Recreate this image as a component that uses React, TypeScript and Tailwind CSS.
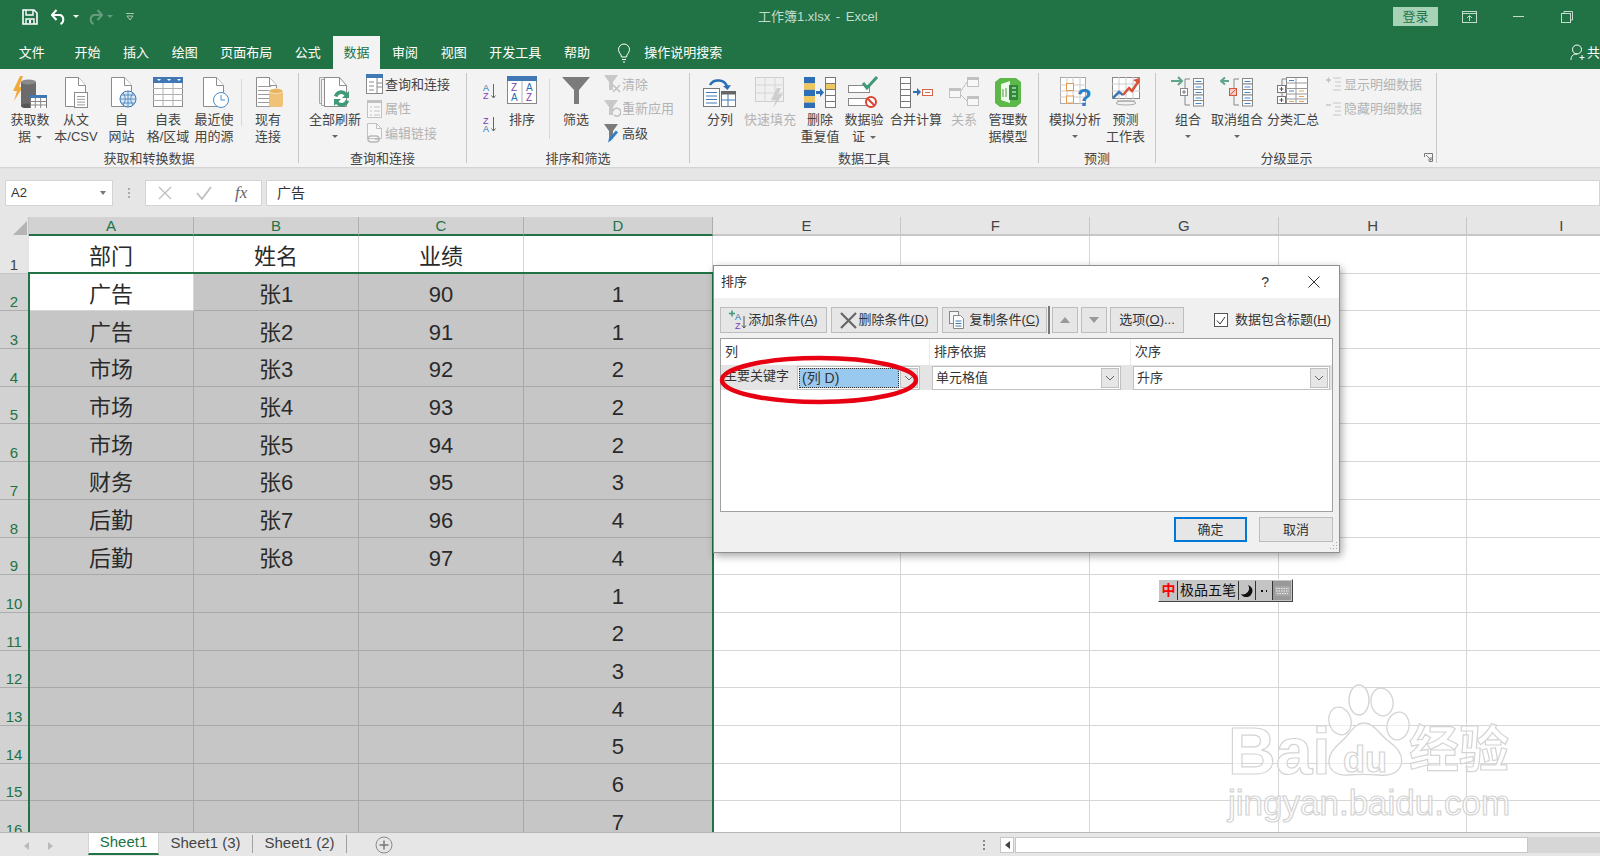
import React from "react";

const S = ({ w = 32, h = 32, children, off }: { w?: number; h?: number; children: React.ReactNode; off?: boolean }) => (
  <svg width={w} height={h} viewBox={`0 0 ${w} ${h}`} className={off ? "opacity-40" : ""}>{children}</svg>
);
const Doc = ({ x = 0, y = 0 }: { x?: number; y?: number }) => (
  <g transform={`translate(${x} ${y})`}>
    <path d="M2.5 1.5h13l7 8v21h-20z" fill="#fff" stroke="#8c8c8c" />
    <path d="M15.5 1.5v8h7" fill="#fff" stroke="#8c8c8c" />
  </g>
);
const Lines = ({ x, y, w, n, gap = 4, c = "#9a9a9a" }: { x: number; y: number; w: number; n: number; gap?: number; c?: string }) => (
  <>{Array.from({ length: n }).map((_, i) => <path key={i} d={`M${x} ${y + i * gap + .5}h${w}`} stroke={c} />)}</>
);
const MiniTable = ({ x, y, w = 15, h = 13 }: { x: number; y: number; w?: number; h?: number }) => (
  <g>
    <rect x={x + .5} y={y + .5} width={w} height={h} fill="#fff" stroke="#777" />
    <rect x={x} y={y} width={w + 1} height={3} fill="#3f78b5" />
    <path d={`M${x} ${y + 6.5}h${w}M${x} ${y + 10}h${w}M${x + w / 3} ${y + 3}v${h - 3}M${x + (2 * w) / 3} ${y + 3}v${h - 3}`} stroke="#888" />
  </g>
);

const IGetData = () => (
  <S w={38}>
    <path d="M9 0L2 15h4L3 25 12 11H8l4-11z" fill="#f2a93b" />
    <path d="M10 6h15v24H10z" fill="#6b6b6b" />
    <ellipse cx="17.5" cy="6" rx="7.5" ry="2.5" fill="#8a8a8a" />
    <ellipse cx="17.5" cy="30" rx="7.5" ry="2.5" fill="#555" />
    <MiniTable x={19} y={19} w={16} h={13} />
  </S>
);
const IFromText = () => (
  <S><Doc x={3} /><rect x="14.5" y="16.5" width="13" height="15" fill="#fff" stroke="#8c8c8c" /><Lines x={17} y={20} w={8} n={4} gap={2.8} /></S>
);
const IWeb = () => (
  <S><Doc x={3} /><circle cx="22" cy="23" r="8" fill="#dbe9f7" stroke="#3f78b5" /><path d="M14 23h16M22 15v16M17 17c3 4 3 8 0 12M27 17c-3 4-3 8 0 12M15.5 19h13M15.5 27h13" stroke="#3f78b5" fill="none" strokeWidth=".8" /></S>
);
const ITable = () => (
  <S><rect x="1.5" y="1.5" width="29" height="29" fill="#fff" stroke="#8c8c8c" /><rect x="1" y="1" width="30" height="6" fill="#3f78b5" /><path d="M1 12.5h30M1 18.5h30M1 24.5h30M11 7v24M21 7v24" stroke="#b0b0b0" /><path d="M5 3l2 2 2-2zM15 3l2 2 2-2zM25 3l2 2 2-2z" fill="#fff" /></S>
);
const IRecent = () => (
  <S><Doc x={3} /><circle cx="23" cy="24" r="7.5" fill="#fff" stroke="#4a8bc9" /><path d="M23 19v5h4" stroke="#4a8bc9" fill="none" /></S>
);
const IExisting = () => (
  <S><Doc x={2} /><Lines x={6} y={10} w={13} n={6} /><rect x="17" y="15" width="14" height="16" rx="2" fill="#f0c277" /><ellipse cx="24" cy="15" rx="7" ry="2.5" fill="#e9b35e" stroke="#fff" strokeWidth=".5" /></S>
);
const IRefreshAll = () => (
  <S w={34}>
    <path d="M1.5 1.5h13v26h-13z" fill="#eee" stroke="#a8a8a8" />
    <path d="M3.5 3.5h13v26h-13z" fill="#f4f4f4" stroke="#a8a8a8" />
    <path d="M6.5 1.5h15l7 8v21h-22z" fill="#fff" stroke="#8c8c8c" /><path d="M21.5 1.5v8h7" fill="none" stroke="#8c8c8c" />
    <path d="M16 20a7.5 7.5 0 0 1 13-3l2-2v7h-7l2.500-2.500a4 4 0 0 0-7 1.500zM31 25a7.500 7.500 0 0 1-13 3l-2 2v-7h7l-2.500 2.500a4 4 0 0 0 7-1.500z" fill="#3f9a76" />
  </S>
);
const IQuery = () => (
  <S w={18} h={20}><rect x=".5" y=".5" width="16" height="19" fill="#fff" stroke="#888" /><rect x="0" y="0" width="17" height="4" fill="#3f78b5" /><path d="M11 4v15M11 9h6M11 13h6M3 8h5M3 12h5M3 16h5" stroke="#8a8a8a" /></S>
);
const IProps = () => (
  <S w={18} h={20} off><rect x="1.500" y="1.500" width="14" height="17" fill="#fff" stroke="#777" /><rect x="1" y="1" width="15" height="3" fill="#777" /><path d="M4 8h2M8 8h6M4 12h2M8 12h6M4 16h2M8 16h6" stroke="#777" /></S>
);
const ILinks = () => (
  <S w={18} h={22} off><path d="M1.500 1.500h9l5 5v10h-14z" fill="#fff" stroke="#777" /><path d="M10.500 1.500v5h5" fill="none" stroke="#777" /><path d="M5 14h5a3 3 0 0 1 0 6H5a3 3 0 0 1 0-6zM9 17h5" fill="none" stroke="#666" strokeWidth="1.500" /></S>
);
const ISortAZ = ({ flip }: { flip?: boolean }) => (
  <svg width="15" height="17" viewBox="0 0 15 17">
    <text x="0" y="8" fontSize="9" fontFamily="Liberation Sans" fill={flip ? "#7a3fb5" : "#2a6fb5"}>{flip ? "Z" : "A"}</text>
    <text x="0" y="16" fontSize="9" fontFamily="Liberation Sans" fill={flip ? "#2a6fb5" : "#7a3fb5"}>{flip ? "A" : "Z"}</text>
    <path d="M10.500 1v14M8.500 12.500l2 2.500 2-2.500" stroke="#666" fill="none" />
  </svg>
);
const ISort = () => (
  <S w={30} h={28}>
    <rect x=".5" y="1" width="29" height="26.500" fill="#fff" stroke="#888" /><rect x="0" y="0" width="30" height="5" fill="#3f78b5" />
    <path d="M15 5v23" stroke="#b0b0b0" />
    <text x="4" y="15" fontSize="10" fontFamily="Liberation Sans" fill="#7a3fb5">Z</text>
    <text x="19" y="15" fontSize="10" fontFamily="Liberation Sans" fill="#2a6fb5">A</text>
    <text x="4" y="25" fontSize="10" fontFamily="Liberation Sans" fill="#2a6fb5">A</text>
    <text x="19" y="25" fontSize="10" fontFamily="Liberation Sans" fill="#7a3fb5">Z</text>
  </S>
);
const IFilter = () => (
  <S w={30} h={29}><path d="M1 1h28L18 14v14h-5V14z" fill="#7b7b7b" /></S>
);
const IFilterSm = ({ kind }: { kind: "clear" | "re" | "adv" }) => (
  <S w={18} h={20} off={kind !== "adv"}>
    <path d="M1 1h14L10 8v8H6V8z" fill={kind === "adv" ? "#7b7b7b" : "#8a8a8a"} />
    {kind === "clear" && <path d="M10 11l7 7M17 11l-7 7" stroke="#777" strokeWidth="1.500" />}
    {kind === "re" && <path d="M10 12a4 4 0 1 1 1 4" stroke="#777" fill="none" strokeWidth="1.500" />}
    {kind === "adv" && <path d="M5 19.500l1-4 7-8 2 2-7 8z" fill="#2f7fd0" />}
  </S>
);
const ISplit = () => (
  <S w={34}>
    <rect x=".5" y="12.500" width="16" height="18" fill="#fff" stroke="#777" /><Lines x={3} y={16} w={11} n={4} gap={3.500} c="#3f78b5" />
    <rect x="18.500" y="15.500" width="14" height="15" fill="#fff" stroke="#777" /><rect x="18" y="15" width="15" height="3.500" fill="#666" /><path d="M25 18v12M18 24h14" stroke="#3f78b5" />
    <path d="M7 9a9 8 0 0 1 17 2" stroke="#2a6fb5" strokeWidth="2.500" fill="none" /><path d="M20 10l4.500 4 3.500-5z" fill="#2a6fb5" />
  </S>
);
const IFlash = () => (
  <S off><rect x="1.500" y="1.500" width="28" height="24" fill="#eee" stroke="#999" /><path d="M1 9h29M1 17h29M11 1v25M21 1v25" stroke="#aaa" /><path d="M23 12l-6 12h5l-3 8 10-14h-5l3-6z" fill="#999" /></S>
);
const IDup = () => (
  <S w={34}>
    {["#2e6eb5", "#f0c75e", "#2e6eb5", "#f0c75e", "#2e6eb5"].map((c, i) => <rect key={i} x="1" y={1 + i * 6.400} width="11" height="6.400" fill={c} />)}
    {["#fff", "#f0c75e", "#fff", "#fff", "#fff"].map((c, i) => <rect key={i} x="22.500" y={1.500 + i * 6} width="10" height="6" fill={c} stroke="#777" />)}
    <path d="M13 15h4v-3l4 4.500-4 4.500v-3h-4z" fill="#2e6eb5" />
  </S>
);
const IValid = () => (
  <S>
    <rect x=".5" y="9.500" width="21" height="7" fill="#fff" stroke="#888" />
    <rect x=".5" y="22.500" width="21" height="7" fill="#fff" stroke="#888" />
    <path d="M15 7l4 5 10-11" stroke="#3f9a76" strokeWidth="3" fill="none" />
    <circle cx="23" cy="26" r="5" fill="#fff" stroke="#d9432f" strokeWidth="2" /><path d="M19.500 22.500l7 7" stroke="#d9432f" strokeWidth="2" />
  </S>
);
const IMerge = () => (
  <S w={34}>
    {[0, 1, 2, 3, 4].map(i => <rect key={i} x="1.500" y={1.500 + i * 6} width="10" height="6" fill="#fff" stroke="#777" />)}
    <path d="M14 15h4v-3l4 4-4 4v-3h-4z" fill="#2e6eb5" />
    <rect x="23.500" y="13.500" width="10" height="6" fill="#fff" stroke="#d9634a" /><path d="M26 16.500h5" stroke="#d9634a" />
  </S>
);
const IRelation = () => (
  <S off>
    <rect x="1.500" y="12.500" width="11" height="9" fill="#fff" stroke="#777" /><rect x="1" y="12" width="12" height="3" fill="#777" />
    <rect x="19.500" y="1.500" width="11" height="9" fill="#fff" stroke="#777" /><rect x="19" y="1" width="12" height="3" fill="#777" />
    <rect x="19.500" y="20.500" width="11" height="9" fill="#fff" stroke="#777" /><rect x="19" y="20" width="12" height="3" fill="#777" />
    <path d="M13 15l6-9M13 19l6 6" stroke="#777" fill="none" />
  </S>
);
const IModel = () => (
  <S w={28}>
    <path d="M6 2h16l5 4v21l-5 4H6l-5-4V6z" fill="#5cb848" />
    <path d="M7 8l9-3v22l-9-3z" fill="#fff" opacity=".9" /><rect x="15" y="9" width="9" height="15" fill="#2f8a37" />
    <path d="M18 12h4M18 16h4M18 20h4M10 11v10" stroke="#fff" /><path d="M9 13v8M12 12v9" stroke="#4a9a3f" />
  </S>
);
const IWhatIf = () => (
  <S>
    <rect x="1.500" y="1.500" width="25" height="26" fill="#fff" stroke="#aaa" />
    <path d="M1 9h26M1 15h26M1 21h26M8 1v27M14 1v27M21 1v27" stroke="#ccc" />
    <rect x="7.500" y="7.500" width="7" height="7" fill="#fff" stroke="#e89a4a" /><rect x="7.500" y="20" width="7" height="7" fill="#fff" stroke="#e89a4a" />
    <text x="18" y="30" fontSize="24" fontWeight="700" fontFamily="Liberation Sans" fill="#2a7fc9">?</text>
  </S>
);
const IForecast = () => (
  <S w={30}>
    <rect x="1.500" y="1.500" width="27" height="21" fill="#fff" stroke="#888" />
    <path d="M1 8h28M1 15h28M8 1v22M15 1v22M22 1v22" stroke="#ccc" />
    <path d="M2 22l6-6 4 3" stroke="#3f78b5" strokeWidth="2.500" fill="none" />
    <path d="M12 19l6-7 3 3 6-9" stroke="#d9533a" strokeWidth="2.500" fill="none" /><path d="M22 4l6-2v6z" fill="#d9533a" />
    <path d="M6 25h18" stroke="#999" /><ellipse cx="15" cy="27" rx="10" ry="2" fill="none" stroke="#aaa" />
  </S>
);
const OutlineCol = ({ x }: { x: number }) => (
  <g>
    {[0, 1, 2, 3, 4].map(i => <g key={i}><rect x={x + .5} y={2.500 + i * 5.500} width="10" height="5.500" fill="#fff" stroke="#888" /><path d={`M${x + 2.500} ${5.500 + i * 5.500}h6`} stroke="#3f88d0" /></g>)}
  </g>
);
const IGroup = ({ un }: { un?: boolean }) => (
  <S w={34}>
    <path d={un ? "M1 5h8M5 1.500L1 5l4 3.500" : "M0 5h11M7 1l4 4-4 4"} stroke="#5fa58a" strokeWidth="2" fill="none" />
    <path d="M19 3h-5v26h5" stroke="#888" fill="none" />
    <rect x="9.500" y="12.500" width="7" height="7" fill={un ? "#f3d0c6" : "#fff"} stroke={un ? "#d9533a" : "#888"} />
    {un ? <path d="M10.500 18.500l5-5" stroke="#d9533a" /> : <path d="M11 16h4M13 14v4" stroke="#777" />}
    <OutlineCol x={22} />
  </S>
);
const ISubtotal = () => (
  <S>
    <rect x="9.500" y="1.500" width="21" height="26" fill="#fff" stroke="#888" />
    <path d="M9 7h22M9 12.500h22M9 18h22M9 23h22M19 1v27" stroke="#999" />
    <path d="M12 4.500h5M12 15h5" stroke="#3f88d0" /><path d="M22 15h5M22 20.500h5M12 25.500h5M22 25.500h5" stroke="#e8a05a" />
    <path d="M9 3H5v7M5 17v8h4" stroke="#888" fill="none" />
    <rect x=".5" y="9.500" width="8" height="7" fill="#fff" stroke="#777" /><path d="M2.500 13h4M4.500 11v4" stroke="#555" />
    <rect x=".5" y="20.500" width="8" height="7" fill="#fff" stroke="#777" /><path d="M2.500 24h4M4.500 22v4" stroke="#555" />
  </S>
);
const IOutSm = ({ plus }: { plus?: boolean }) => (
  <S w={16} h={16} off>
    <path d={plus ? "M0 4h5M2.500 1.500v5" : "M0 4h5"} stroke="#777" strokeWidth="1.300" />
    <path d="M7 2h8M9 6h6M9 10h6M7 14h8" stroke="#888" />
  </S>
);

const Caret = ({ inline }: { inline?: boolean }) => (
  <span className={`${inline ? "ml-[5px] align-middle" : ""} inline-block w-0 h-0 border-x-[3px] border-x-transparent border-t-[3px] border-t-[#666]`} />
);

const Big = ({ w, icon, t, caret, off }: { w: number; icon: React.ReactNode; t: string[]; caret?: "inline" | "line"; off?: boolean }) => (
  <div className={`flex flex-col items-center shrink-0 ${off ? "text-[#b4b4b4]" : "text-[#444]"}`} style={{ width: w }}>
    <div className="h-[35px] flex items-start justify-center">{icon}</div>
    {t.map((l, i) => (
      <div key={i} className="h-[17px] leading-[17px] text-[13px] whitespace-nowrap">
        {l}{caret === "inline" && i === t.length - 1 && <Caret inline />}
      </div>
    ))}
    {caret === "line" && <div className="h-[17px] flex items-center"><Caret /></div>}
  </div>
);

const Small = ({ icon, t, off, iw = 20 }: { icon: React.ReactNode; t: string; off?: boolean; iw?: number }) => (
  <div className={`h-[24.5px] flex items-center text-[13px] whitespace-nowrap ${off ? "text-[#b4b4b4]" : "text-[#444]"}`}>
    <div className="flex justify-center shrink-0" style={{ width: iw }}>{icon}</div>
    {t}
  </div>
);

const Group = ({ w, label, children, launcher, labelPad = 0 }: { w: number; label: string; children: React.ReactNode; launcher?: boolean; labelPad?: number }) => (
  <div className="relative h-[90px] flex flex-col shrink-0 border-r border-r-[#c8c8c8]" style={{ width: w }}>
    <div className="flex h-[71px] items-start pt-[3px]">{children}</div>
    <div className="mt-auto -mb-[4px] h-[17px] leading-[17px] text-[13px] text-center text-[#444]" style={{ paddingRight: labelPad }}>{label}</div>
    {launcher && (
      <svg width="9" height="9" viewBox="0 0 9 9" className="absolute right-[3px] bottom-[1px]"><path d="M.5 4V.5H8.500V8.500H5M2 2l5 5M4 7h3V4" stroke="#777" fill="none" /></svg>
    )}
  </div>
);

const VSep = ({ ml = 0, mr = 0, h = 47 }: { ml?: number; mr?: number; h?: number }) => (
  <div className="w-px bg-[#d8d8d8] shrink-0 mt-[3px]" style={{ marginLeft: ml, marginRight: mr, height: h }} />
);

const Ribbon = () => (
  <div className="h-[99px] shrink-0 bg-[#f3f3f3] border-b border-b-[#d4d4d4] flex pt-[4px] items-start">
    <Group w={299} label="获取和转换数据">
      <div className="w-[7px]" />
      <Big w={46} icon={<IGetData />} t={["获取数", "据"]} caret="inline" />
      <Big w={46} icon={<IFromText />} t={["从文", "本/CSV"]} />
      <Big w={45} icon={<IWeb />} t={["自", "网站"]} />
      <Big w={48} icon={<ITable />} t={["自表", "格/区域"]} />
      <Big w={44} icon={<IRecent />} t={["最近使", "用的源"]} />
      <VSep ml={5} mr={4} />
      <Big w={44} icon={<IExisting />} t={["现有", "连接"]} />
    </Group>
    <Group w={168} label="查询和连接">
      <div className="w-[8px]" />
      <Big w={56} icon={<IRefreshAll />} t={["全部刷新"]} caret="line" />
      <div className="flex flex-col -mt-[4px] ml-[2px]">
        <Small icon={<IQuery />} t="查询和连接" />
        <Small icon={<IProps />} t="属性" off />
        <Small icon={<ILinks />} t="编辑链接" off />
      </div>
    </Group>
    <Group w={223} label="排序和筛选">
      <div className="flex flex-col w-[36px] items-end pr-[5px] gap-[16px] pt-[7px]">
        <ISortAZ />
        <ISortAZ flip />
      </div>
      <Big w={38} icon={<ISort />} t={["排序"]} />
      <VSep ml={8} mr={9} h={60} />
      <Big w={34} icon={<IFilter />} t={["筛选"]} />
      <div className="flex flex-col -mt-[4px] ml-[9px]">
        <Small icon={<IFilterSm kind="clear" />} t="清除" off />
        <Small icon={<IFilterSm kind="re" />} t="重新应用" off />
        <Small icon={<IFilterSm kind="adv" />} t="高级" />
      </div>
    </Group>
    <Group w={349} label="数据工具">
      <div className="w-[12px]" />
      <Big w={36} icon={<ISplit />} t={["分列"]} />
      <Big w={64} icon={<IFlash />} t={["快速填充"]} off />
      <Big w={36} icon={<IDup />} t={["删除", "重复值"]} />
      <Big w={52} icon={<IValid />} t={["数据验", "证"]} caret="inline" />
      <Big w={52} icon={<IMerge />} t={["合并计算"]} />
      <Big w={44} icon={<IRelation />} t={["关系"]} off />
      <Big w={44} icon={<IModel />} t={["管理数", "据模型"]} />
    </Group>
    <Group w={117} label="预测">
      <div className="w-[8px]" />
      <Big w={56} icon={<IWhatIf />} t={["模拟分析"]} caret="line" />
      <Big w={45} icon={<IForecast />} t={["预测", "工作表"]} />
    </Group>
    <Group w={281} label="分级显示" launcher labelPad={19}>
      <div className="w-[9px]" />
      <Big w={46} icon={<IGroup />} t={["组合"]} caret="line" />
      <Big w={52} icon={<IGroup un />} t={["取消组合"]} caret="line" />
      <Big w={60} icon={<ISubtotal />} t={["分类汇总"]} />
      <div className="flex flex-col -mt-[4px] ml-[1px]">
        <Small icon={<IOutSm plus />} t="显示明细数据" off />
        <Small icon={<IOutSm />} t="隐藏明细数据" off />
      </div>
    </Group>
  </div>
);

const tabs = ["开始", "插入", "绘图", "页面布局", "公式", "数据", "审阅", "视图", "开发工具", "帮助"];

const Top = () => (
  <div className="h-[69px] shrink-0 bg-[#217346] flex flex-col">
    <div className="h-[33px] flex items-center relative shrink-0">
      <div className="flex items-center w-[758px]">
        <svg width="16" height="16" viewBox="0 0 16 16" className="ml-[22px]"><path d="M1 1h11l3 3v11H1z" fill="none" stroke="#fff" strokeWidth="1.600" /><path d="M4 1v5h7V1M4 15v-5h8v5" fill="none" stroke="#fff" strokeWidth="1.400" /><rect x="7" y="11" width="2" height="3" fill="#fff" /></svg>
        <svg width="17" height="16" viewBox="0 0 17 16" className="ml-[13px]"><path d="M1.500 6h8a5 5 0 0 1 0 9M5.500 1L1 6l4.500 5" fill="none" stroke="#fff" strokeWidth="2" /></svg>
        <span className="ml-[5px] w-0 h-0 border-x-[3px] border-x-transparent border-t-[3px] border-t-white" />
        <svg width="16" height="16" viewBox="0 0 16 16" className="ml-[8px] opacity-30"><path d="M14.500 6h-8a5 5 0 0 0 0 9M10.500 1L15 6l-4.500 5" fill="none" stroke="#fff" strokeWidth="2" /></svg>
        <span className="ml-[4px] w-0 h-0 border-x-[3px] border-x-transparent border-t-[3px] border-t-white opacity-30" />
        <svg width="10" height="10" viewBox="0 0 10 10" className="ml-[12px] opacity-60"><path d="M1 1.500h8M2 4l3 4 3-4z" fill="none" stroke="#fff" /></svg>
      </div>
      <div className="text-[13px] text-[#c3dccd] whitespace-nowrap [word-spacing:2px]">工作簿1.xlsx - Excel</div>
      <div className="ml-auto flex items-center">
        <div className="w-[45px] h-[19px] bg-[#a8d2b6] text-[#217346] text-[13px] leading-[19px] text-center">登录</div>
        <svg width="15" height="12" viewBox="0 0 15 12" className="ml-[24px]"><rect x=".5" y=".5" width="14" height="11" fill="none" stroke="#c3dccd" /><path d="M1 2.500h13M7.500 10V5M5 7l2.500-2.500L10 7" stroke="#c3dccd" fill="none" /></svg>
        <div className="ml-[36px] w-[11px] h-px bg-[#c3dccd]" />
        <svg width="12" height="12" viewBox="0 0 12 12" className="ml-[37px] mr-[27px]"><rect x=".5" y="2.500" width="9" height="9" fill="none" stroke="#c3dccd" /><path d="M3 2.500V.5h8.500v8.500H9.500" fill="none" stroke="#c3dccd" /></svg>
      </div>
    </div>
    <div className="h-[36px] flex items-end text-[13px] text-white relative shrink-0">
      <div className="ml-[7.5px] mr-[7px] px-[11.3px] h-[33px] leading-[34px]">文件</div>
      {tabs.map(t => (
        <div key={t} className={t === "数据"
          ? "h-[33px] leading-[34px] px-[10.3px] mx-[1px] bg-[#f3f3f3] text-[#217346]"
          : "h-[33px] leading-[34px] px-[11.3px]"}>{t}</div>
      ))}
      <svg width="16" height="20" viewBox="0 0 16 20" className="ml-[15px] mb-[6px]"><path d="M5.500 14c0-3-3-4-3-7.500a5.500 5.500 0 0 1 11 0c0 3.500-3 4.500-3 7.500zM6 16.500h4M7 19h2" fill="none" stroke="#fff" /></svg>
      <div className="ml-[12px] h-[33px] leading-[34px]">操作说明搜索</div>
      <div className="absolute left-[1570px] bottom-0 h-[33px] flex items-center whitespace-nowrap">
        <svg width="16" height="17" viewBox="0 0 16 17"><circle cx="7" cy="5.500" r="4.500" fill="none" stroke="#fff" /><path d="M1 16c0-4 2-6 6-6M12 11v5M9.500 13.500h5" fill="none" stroke="#fff" /></svg>
        <span className="ml-[1px]">共享</span>
      </div>
    </div>
  </div>
);

const FormulaBar = () => (
  <div className="h-[49px] shrink-0 bg-[#e6e6e6] flex items-start pt-[11px] border-t border-t-[#e0e0e0]">
    <div className="ml-[5px] w-[108px] h-[26px] bg-white border border-[#d4d4d4] flex items-center justify-between pl-[5px] pr-[6px] text-[13px] text-[#333]">
      A2<span className="w-0 h-0 border-x-[3px] border-x-transparent border-t-[4px] border-t-[#777]" />
    </div>
    <div className="w-[32px] h-[26px] flex flex-col items-center justify-center gap-[2px]">
      <i className="w-[2px] h-[2px] bg-[#aaa]" /><i className="w-[2px] h-[2px] bg-[#aaa]" /><i className="w-[2px] h-[2px] bg-[#aaa]" />
    </div>
    <div className="w-[117px] h-[26px] bg-white border border-[#d4d4d4] flex items-center text-[#666]">
      <svg width="14" height="14" viewBox="0 0 14 14" className="ml-[12px]"><path d="M1 1l12 12M13 1L1 13" stroke="#c0c0c0" strokeWidth="1.400" /></svg>
      <svg width="16" height="14" viewBox="0 0 16 14" className="ml-[24px]"><path d="M1 7l5 6L15 1" stroke="#c0c0c0" strokeWidth="1.800" fill="none" /></svg>
      <span className="ml-[23px] text-[17px] italic [font-family:'Liberation_Serif',serif]">fx</span>
    </div>
    <div className="ml-[4px] flex-1 h-[26px] bg-white border border-[#d4d4d4] text-[14px] leading-[24px] pl-[10px] text-[#333]">广告</div>
  </div>
);

const COLS = ["A", "B", "C", "D", "E", "F", "G", "H", "I"];
const SEL = ["A", "B", "C", "D"];
const colW = (c: string) => (["A", "B", "C"].includes(c) ? "w-[165px]" : "w-[188.7px]");
const DATA: [string, string, string, string][] = [
  ["部门", "姓名", "业绩", ""],
  ["广告", "张1", "90", "1"],
  ["广告", "张2", "91", "1"],
  ["市场", "张3", "92", "2"],
  ["市场", "张4", "93", "2"],
  ["市场", "张5", "94", "2"],
  ["财务", "张6", "95", "3"],
  ["后勤", "张7", "96", "4"],
  ["后勤", "张8", "97", "4"],
  ["", "", "", "1"],
  ["", "", "", "2"],
  ["", "", "", "3"],
  ["", "", "", "4"],
  ["", "", "", "5"],
  ["", "", "", "6"],
  ["", "", "", "7"],
];

const Sheet = () => (
  <div className="relative flex-1 overflow-hidden bg-white">
    <div className="flex h-[19px]">
      <div className="w-[29px] shrink-0 bg-[#e6e6e6] relative border-r border-r-[#c6c6c6]">
        <svg width="14" height="14" viewBox="0 0 14 14" className="absolute right-[1px] bottom-[1px]"><path d="M14 0v14H0z" fill="#b4b4b4" /></svg>
      </div>
      {COLS.map(c => {
        const s = SEL.includes(c);
        return (
          <div key={c} className={`${colW(c)} shrink-0 text-center text-[15px] leading-[18px] [font-family:'Liberation_Sans',sans-serif] border-r ${s ? "bg-[#d2d2d2] text-[#217346] border-b-2 border-b-[#217346] border-r-[#aeaeae]" : "bg-[#e6e6e6] text-[#444] border-b-2 border-b-[#c6c6c6] border-r-[#c6c6c6]"}`}>{c}</div>
        );
      })}
    </div>
    {DATA.map((r, i) => {
      const selRow = i > 0;
      return (
        <div key={i} className="flex h-[37.7px]">
          <div className={`w-[29px] shrink-0 flex items-end justify-center text-[15px] leading-[16px] pr-[1px] [font-family:'Liberation_Sans',sans-serif] border-b ${selRow ? "bg-[#d2d2d2] text-[#217346] border-b-[#aeaeae]" : "bg-[#e6e6e6] text-[#444] border-b-[#c6c6c6]"}`}>{i + 1}</div>
          {COLS.map((c, j) => {
            const inSel = selRow && j < 4;
            const active = i === 1 && j === 0;
            const bg = inSel && !active ? "bg-[#c6c6c6] border-[#a8a8a8]" : "bg-white border-[#d6d6d6]";
            return (
              <div key={c} className={`${colW(c)} shrink-0 border-r border-b ${bg} flex items-center justify-center pt-[5px] text-[22px] text-[#2a2a2a]`}>{r[j] ?? ""}</div>
            );
          })}
        </div>
      );
    })}
    <div className="absolute left-[28px] top-[55px] w-[686px] h-[640px] border-2 border-[#217346] pointer-events-none" />
  </div>
);

const Footer = () => (
  <div className="h-[24px] shrink-0 bg-[#e6e6e6] flex items-stretch text-[15px] text-[#444] border-t border-t-[#b8b8b8] relative">
    <svg width="5" height="8" viewBox="0 0 5 8" className="ml-[24px] mt-[9px] opacity-30"><path d="M5 0v8L0 4z" fill="#555" /></svg>
    <svg width="5" height="8" viewBox="0 0 5 8" className="ml-[19px] mt-[9px] opacity-30"><path d="M0 0v8l5-4z" fill="#555" /></svg>
    <div className="ml-[35px] w-[71px] h-[22px] bg-white border-b-2 border-b-[#217346] border-x border-x-[#d4d4d4] text-[#217346] text-center leading-[17px]">Sheet1</div>
    <div className="w-[94px] text-center leading-[15px] h-[18px] mt-[2px] border-r border-r-[#a0a0a0]">Sheet1 (3)</div>
    <div className="w-[94px] text-center leading-[15px] h-[18px] mt-[2px] border-r border-r-[#a0a0a0]">Sheet1 (2)</div>
    <svg width="18" height="18" viewBox="0 0 18 18" className="ml-[28px] mt-[3px]"><circle cx="9" cy="9" r="8" fill="none" stroke="#8a8a8a" /><path d="M9 4.500v9M4.500 9h9" stroke="#777" strokeWidth="1.500" /></svg>
    <div className="ml-auto flex items-center">
      <div className="flex flex-col gap-[2px] mr-[15px]"><i className="w-[2px] h-[2px] bg-[#888]" /><i className="w-[2px] h-[2px] bg-[#888]" /><i className="w-[2px] h-[2px] bg-[#888]" /></div>
      <div className="w-[14px] h-[16px] bg-white border border-[#c6c6c6] flex items-center justify-center mr-[1px]"><svg width="5" height="8" viewBox="0 0 5 8"><path d="M5 0v8L0 4z" fill="#444" /></svg></div>
      <div className="w-[513px] h-[16px] bg-white border border-[#c6c6c6]" />
      <div className="w-[72px] h-[16px] bg-[#d6d6d6]" />
    </div>
  </div>
);

const DBtn = ({ w, children }: { w: number; children?: React.ReactNode }) => (
  <div className="h-[26px] shrink-0 bg-[#e6e6e6] border border-[#bdbdbd] flex items-center justify-center text-[13px] text-[#333] whitespace-nowrap" style={{ width: w }}>{children}</div>
);

const Chevron = () => (
  <svg width="10" height="6" viewBox="0 0 10 6"><path d="M1 1l4 4 4-4" stroke="#666" fill="none" /></svg>
);

const Combo = ({ w, t, sel }: { w: number; t: string; sel?: boolean }) => (
  <div className="h-[24px] bg-white border border-[#c0c0c0] flex items-stretch text-[13px] text-[#333] shrink-0 p-[1px]" style={{ width: w }}>
    {sel
      ? <div className="flex-1 bg-[#99c9ef] border border-dotted border-[#333] pl-[2px] leading-[18px] text-[14px]">(列 D)</div>
      : <div className="flex-1 pl-[2px] leading-[19px]">{t}</div>}
    <div className="w-[18px] ml-[1px] bg-[#e6e6e6] border border-[#c0c0c0] flex items-center justify-center"><Chevron /></div>
  </div>
);

const Dialog = () => (
  <div className="absolute left-[713px] top-[265px] w-[627px] h-[288px] bg-[#f0f0f0] border border-[#8f8f8f] shadow-[2px_3px_8px_rgba(0,0,0,0.35)] flex flex-col text-[#333]">
    <div className="h-[32px] bg-white flex items-center pl-[7px] text-[13px] shrink-0">
      排序
      <span className="ml-auto text-[14px] mr-[39px] [font-family:'Liberation_Sans',sans-serif]">?</span>
      <svg width="12" height="12" viewBox="0 0 12 12" className="mr-[19px]"><path d="M.5.5l11 11M11.500.5l-11 11" stroke="#333" /></svg>
    </div>
    <div className="flex items-center h-[26px] pl-[6px] mt-[9px] shrink-0">
      <DBtn w={107}>
        <svg width="18" height="20" viewBox="0 0 18 20" className="mr-[1px]"><path d="M0 3.500h6M3 .5v6" stroke="#3f9a76" strokeWidth="1.500" /><text x="6" y="10" fontSize="9" fontFamily="Liberation Sans" fill="#2a6fb5">A</text><text x="6" y="19" fontSize="9" fontFamily="Liberation Sans" fill="#7a3fb5">Z</text><path d="M15 6v12M13 15.500l2 2.500 2-2.500" stroke="#555" fill="none" /></svg>
        添加条件(<u>A</u>)
      </DBtn>
      <div className="w-[4px]" />
      <DBtn w={107}>
        <svg width="17" height="17" viewBox="0 0 17 17" className="mr-[1px]"><path d="M1 1l15 15M16 1L1 16" stroke="#666" strokeWidth="2.200" /></svg>
        删除条件(<u>D</u>)
      </DBtn>
      <div className="w-[4px]" />
      <DBtn w={105}>
        <svg width="16" height="18" viewBox="0 0 16 18" className="mr-[4px]"><rect x=".5" y=".5" width="9" height="12" fill="#f6f6f6" stroke="#888" /><path d="M4.500 4.500h7l3 3v10h-10z" fill="#fff" stroke="#888" /><path d="M6.500 10h6M6.500 12.500h6M6.500 15h6" stroke="#3f78b5" /></svg>
        复制条件(<u>C</u>)
      </DBtn>
      <div className="w-[2px] h-[28px] bg-[#777] ml-[1px] mr-[2px] shrink-0" />
      <DBtn w={26}><span className="w-0 h-0 border-x-[5px] border-x-transparent border-b-[6px] border-b-[#999]" /></DBtn>
      <div className="w-[3px]" />
      <DBtn w={26}><span className="w-0 h-0 border-x-[5px] border-x-transparent border-t-[6px] border-t-[#999]" /></DBtn>
      <div className="w-[3px]" />
      <DBtn w={74}>选项(<u>O</u>)...</DBtn>
      <div className="ml-[30px] w-[14px] h-[14px] bg-white border border-[#555] flex items-center justify-center">
        <svg width="10" height="9" viewBox="0 0 10 9"><path d="M1 4.500l3 3.500 5-7" stroke="#333" fill="none" /></svg>
      </div>
      <span className="ml-[7px] text-[13px] whitespace-nowrap">数据包含标题(<u>H</u>)</span>
    </div>
    <div className="mt-[5px] ml-[6px] w-[613px] h-[174px] bg-white border border-[#a0a0a0] shrink-0 flex flex-col">
      <div className="flex h-[26px] text-[13px] leading-[26px] shrink-0">
        <div className="w-[209px] pl-[4px] border-r border-r-[#ececec]">列</div>
        <div className="w-[201px] pl-[4px] border-r border-r-[#ececec]">排序依据</div>
        <div className="pl-[4px]">次序</div>
      </div>
      <div className="flex h-[25px] bg-[#e4e4e4] items-center">
        <div className="w-[76px] pl-[3px] text-[13px] pb-[3px] whitespace-nowrap">主要关键字</div>
        <Combo w={123} t="" sel />
        <div className="w-[12px]" />
        <Combo w={189} t="单元格值" />
        <div className="w-[12px]" />
        <Combo w={197} t="升序" />
      </div>
    </div>
    <div className="flex justify-end gap-[12px] mt-[5px] pr-[6px] shrink-0">
      <div className="w-[73px] h-[25px] bg-[#e6e6e6] border-2 border-[#0078d7] text-[13px] text-center leading-[21px]">确定</div>
      <div className="w-[74px] h-[25px] bg-[#e6e6e6] border border-[#bdbdbd] text-[13px] text-center leading-[23px]">取消</div>
    </div>
    <svg width="10" height="10" viewBox="0 0 10 10" className="absolute right-[1px] bottom-[1px]"><path d="M8 1h1v1H8zM5 4h1v1H5zM8 4h1v1H8zM2 7h1v1H2zM5 7h1v1H5zM8 7h1v1H8z" fill="#aaa" /></svg>
    <svg width="204" height="52" viewBox="0 0 204 52" className="absolute left-[3px] top-[88px] pointer-events-none"><ellipse cx="102" cy="26" rx="97" ry="22" fill="none" stroke="#e60012" strokeWidth="4.500" /></svg>
  </div>
);

const Ime = () => (
  <div className="absolute left-[1158px] top-[579px] w-[135px] h-[23px] bg-[#c4c4c4] border border-t-white border-l-white border-r-[#444] border-b-[#444] flex items-stretch p-[1px] text-[15px] text-[#111] leading-[18px]">
    <div className="w-[18px] text-center text-[#f00] font-bold border-r border-r-[#333] text-[14px]">中</div>
    <div className="w-[61px] text-center border-r border-r-[#333] bg-[#c8c8c8] whitespace-nowrap text-[14px]">极品五笔</div>
    <div className="w-[17px] flex items-center justify-center border-r border-r-[#333]">
      <svg width="12" height="12" viewBox="0 0 12 12"><path d="M7 0a6 6 0 0 1-7 9 6 6 0 0 0 11-1 6 6 0 0 0-4-8z" fill="#111" /></svg>
    </div>
    <div className="w-[17px] flex items-center justify-center border-r border-r-[#333] gap-[3px]"><i className="w-[2px] h-[2px] bg-[#111]" /><i className="w-[1px] h-[2px] bg-[#111]" /></div>
    <div className="flex-1 flex items-center justify-center bg-[#999]">
      <svg width="15" height="10" viewBox="0 0 15 10"><rect x="0" y="0" width="15" height="10" fill="#a8a8a8" /><path d="M1 2.500h13M1 5h13M2 7.500h11" stroke="#eee" strokeDasharray="1.500 1" /></svg>
    </div>
  </div>
);

const WM = "text-white/60 [-webkit-text-stroke:1.2px_#d4d4d4]";
const Watermark = () => (
  <div className="absolute left-[1228px] top-[684px] w-[290px] h-[140px] pointer-events-none">
    <div className={`absolute left-0 top-[30px] text-[66px] leading-[74px] font-bold [font-family:'Liberation_Sans',sans-serif] ${WM}`}>Bai</div>
    <svg width="90" height="96" viewBox="0 0 90 96" className="absolute left-[96px] top-0" fill="rgba(255,255,255,.6)" stroke="#d4d4d4" strokeWidth="1.300">
      <ellipse cx="16" cy="37" rx="11" ry="14" transform="rotate(-15 16 37)" />
      <ellipse cx="35" cy="16" rx="10" ry="15" />
      <ellipse cx="58" cy="18" rx="11" ry="14" transform="rotate(-10 58 18)" />
      <ellipse cx="74" cy="42" rx="11" ry="14" transform="rotate(10 74 42)" />
      <path d="M40 39c9 0 14 9 23 17 9 7 17 13 14 25-3 9-13 11-22 10-11-1-20-1-31 0-9 1-18-3-19-12-1-11 8-17 15-24 7-7 11-16 20-16z" />
    </svg>
    <div className={`absolute left-[115px] top-[56px] text-[36px] leading-[40px] font-bold [font-family:'Liberation_Sans',sans-serif] ${WM}`}>du</div>
    <div className={`absolute left-[181px] top-[38px] text-[50px] leading-[56px] whitespace-nowrap font-bold ${WM}`}>经验</div>
    <div className={`absolute left-0 top-[98px] text-[35px] leading-[42px] whitespace-nowrap [font-family:'Liberation_Sans',sans-serif] ${WM}`}>jingyan.baidu.com</div>
  </div>
);

export default function App() {
  return (
    <div className="relative w-[1600px] h-[856px] overflow-hidden flex flex-col bg-white [font-family:'Liberation_Sans','Noto_Sans_CJK_SC',sans-serif]">
      <Top />
      <Ribbon />
      <FormulaBar />
      <Sheet />
      <Footer />
      <Dialog />
      <Ime />
      <Watermark />
    </div>
  );
}
